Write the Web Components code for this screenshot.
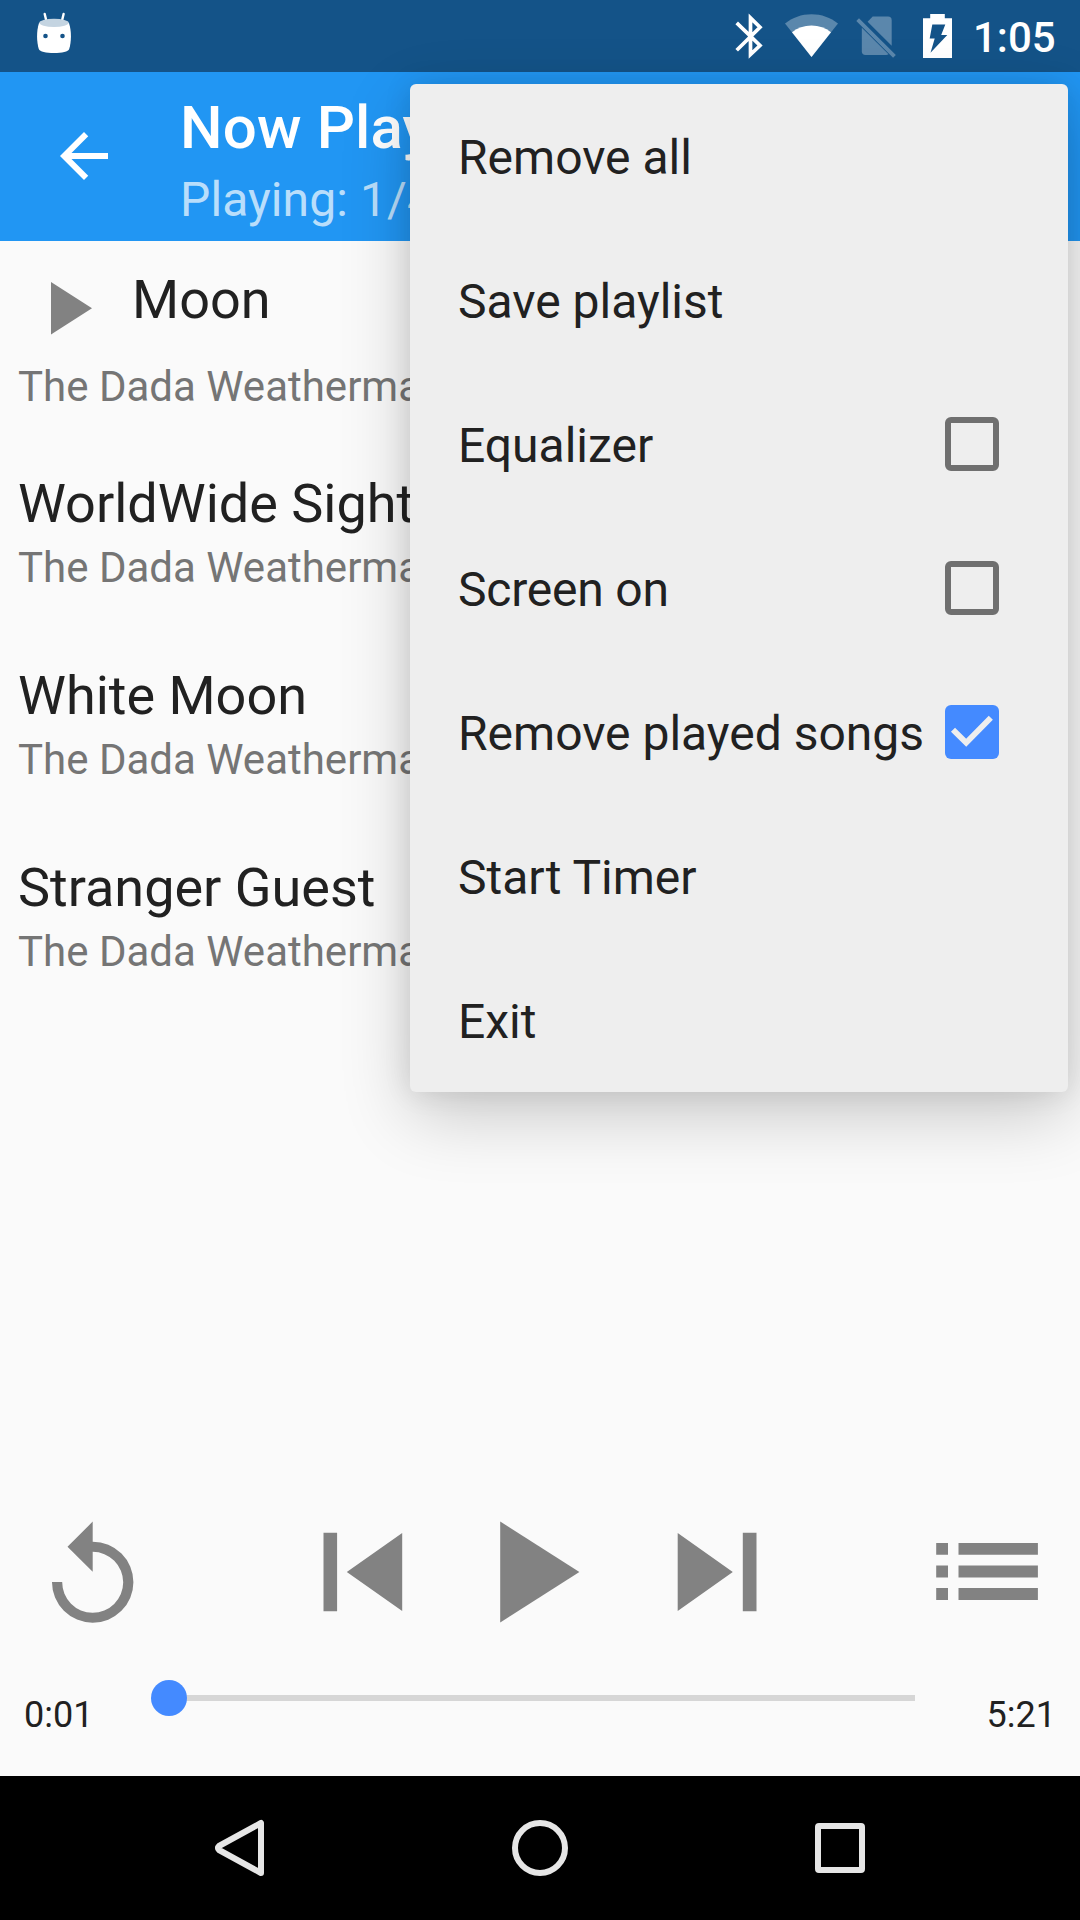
<!DOCTYPE html>
<html lang="en">
<head>
<meta charset="utf-8">
<title>Now Playing</title>
<style>
  html, body { margin: 0; padding: 0; }
  body { width: 1080px; height: 1920px; overflow: hidden; background: #fafafa; font-family: Roboto, "Liberation Sans", sans-serif; color: #212121; }
</style>
</head>
<body>
<phone-screen>
  <status-bar slot="status">1:05</status-bar>
  <app-header slot="header">Now Playing<span slot="subtitle">Playing: 1/4</span></app-header>
  <song-row playing>Moon<span slot="artist">The Dada Weatherman</span></song-row>
  <song-row>WorldWide Sight<span slot="artist">The Dada Weatherman</span></song-row>
  <song-row>White Moon<span slot="artist">The Dada Weatherman</span></song-row>
  <song-row>Stranger Guest<span slot="artist">The Dada Weatherman</span></song-row>
  <player-controls slot="controls"></player-controls>
  <seek-bar slot="seek"><span slot="elapsed">0:01</span><span slot="total">5:21</span></seek-bar>
  <nav-bar slot="nav"></nav-bar>
  <popup-menu slot="menu">
    <menu-item>Remove all</menu-item>
    <menu-item>Save playlist</menu-item>
    <menu-item>Equalizer<check-box slot="control"></check-box></menu-item>
    <menu-item style="letter-spacing:-.2px">Screen on<check-box slot="control"></check-box></menu-item>
    <menu-item>Remove played songs<check-box slot="control" checked></check-box></menu-item>
    <menu-item>Start Timer</menu-item>
    <menu-item>Exit</menu-item>
  </popup-menu>
</phone-screen>

<script>
  function define(name, html) {
    customElements.define(name, class extends HTMLElement {
      constructor() {
        super();
        this.attachShadow({ mode: 'open' }).innerHTML = html;
      }
    });
  }

  define('phone-screen', `
    <style>
      :host { display: flex; flex-direction: column; position: relative; width: 1080px; height: 1920px; background: #fafafa; overflow: hidden; white-space: nowrap; }
      .list { flex: 1; display: flex; flex-direction: column; min-height: 0; }
    </style>
    <slot name="status"></slot>
    <slot name="header"></slot>
    <div class="list"><slot></slot></div>
    <slot name="controls"></slot>
    <slot name="seek"></slot>
    <slot name="nav"></slot>
    <slot name="menu"></slot>`);

  define('status-bar', `
    <style>
      :host { display: flex; flex: none; box-sizing: border-box; height: 72px; padding: 0 23px 0 36px; background: #145388; color: #fff; }
      svg { display: block; flex: none; }
      .gap { flex: 1; }
      .wifi { margin-left: 16px; } .sim { margin-left: 12px; } .bat { margin-left: 20px; }
      .time { width: 84px; margin-left: 17px; padding-top: 13px; font-size: 42px; font-weight: 500; line-height: 49px; }
    </style>
    <svg width="36" height="72" viewBox="36 0 36 72">
      <path d="M44.7 14 46.5 21.5M63.6 14 61.8 21.5" stroke="#fff" stroke-width="2.4" stroke-linecap="round"/>
      <path d="M39 23C36.300 31 36.600 42 38.800 49 39.700 51.600 46 53 54 53S68.300 51.600 69.200 49C71.400 42 71.700 31 69 23Z" fill="#fff"/>
      <ellipse cx="54" cy="22.800" rx="14.800" ry="4.100" fill="#c4d4e1"/>
      <circle cx="45.500" cy="36" r="2.300" fill="#145388"/><circle cx="62.500" cy="36" r="2.300" fill="#145388"/>
    </svg>
    <div class="gap"></div>
    <svg width="36" height="72" viewBox="732 0 36 72"><path d="M736.700 22.800 760 45.500 750.500 54.500V18L760 27.300 736.700 50.200" fill="none" stroke="#fff" stroke-width="3.700"/></svg>
    <svg class="wifi" width="56" height="72" viewBox="784 0 56 72">
      <path d="M811.500 57 785 23.500C792.500 17.500 801.500 14.200 811.500 14.200S830.500 17.500 838 23.500Z" fill="#fff" opacity=".3"/>
      <path d="M811.500 57 792 32.300C797.500 27.800 804 25.600 811.500 25.600S825.500 27.800 831 32.300Z" fill="#fff"/>
    </svg>
    <svg class="sim" width="48" height="72" viewBox="852 0 48 72">
      <g fill="#fff" opacity=".3"><path d="M861.800 27.700 888.500 54.200Q887.500 55 886 55H865.500Q861.800 55 861.800 51.300Z"/><path d="M867.600 21.800 872.700 16.500H888Q891.700 16.500 891.700 20.200V45.800Z"/><path d="M856.300 20.900 859 18.200 895.800 55.100 893.100 57.800Z"/></g>
    </svg>
    <svg class="bat" width="36" height="72" viewBox="920 0 36 72">
      <path d="M930.200 14H944.800V18.300H952V58H923V18.300H930.200Z" fill="#fff"/>
      <path d="M932.300 24.500H945.300L941.200 34.900H947.300L930.500 52.800 934.700 38.600H929.700Z" fill="#145388"/>
    </svg>
    <div class="time"><slot></slot></div>`);

  define('app-header', `
    <style>
      :host { display: flex; flex: none; box-sizing: border-box; height: 169px; background: #2196f3; color: #fff; }
      svg { display: block; flex: none; margin: 48px 48px 0 48px; }
      .title { margin-top: 20px; font-size: 60px; font-weight: 500; line-height: 71px; letter-spacing: .15px; }
      .sub { margin-top: 8px; font-size: 48px; line-height: 57px; letter-spacing: .1px; color: rgba(255,255,255,.7); }
      .text { margin-left: 12px; }
    </style>
    <svg width="72" height="72" viewBox="0 0 24 24" fill="#fff"><path d="M20 11H7.830l5.590-5.590L12 4l-8 8 8 8 1.410-1.410L7.830 13H20v-2z"/></svg>
    <div class="text"><div class="title"><slot></slot></div><div class="sub"><slot name="subtitle"></slot></div></div>`);

  define('song-row', `
    <style>
      :host { display: block; flex: none; box-sizing: border-box; height: 192px; padding: 15px 18px 0; }
      :host([playing]) { height: 216px; padding-top: 27px; }
      .head { display: flex; height: 63px; }
      svg { display: none; flex: none; margin: 14px 40px 0 33px; }
      :host([playing]) svg { display: block; }
      .title { font-size: 54px; line-height: 63px; }
      .artist { margin-top: 8px; font-size: 42px; line-height: 49px; color: #757575; }
      :host([playing]) .artist { margin-top: 31px; }
    </style>
    <div class="head"><svg width="41" height="53" viewBox="0 0 41 53"><path d="M0 0 41 26.200 0 52.400Z" fill="#828282"/></svg><div class="title"><slot></slot></div></div>
    <div class="artist"><slot name="artist"></slot></div>`);

  define('player-controls', `
    <style>
      :host { display: flex; flex: none; box-sizing: border-box; height: 120px; padding: 0 32px; justify-content: space-between; }
      div { display: flex; gap: 57px; }
      svg { display: block; flex: none; fill: #828282; }
    </style>
    <svg width="120" height="120"><path d="M60.700 29.700V9.600L35.500 34.700 60.700 59.700V39.800A30.500 30.500 0 1 1 30.200 70.100H20A40.700 40.500 0 1 0 60.700 29.700Z"/></svg>
    <div>
      <svg width="120" height="120"><path d="M20.500 20.700H34.100V99.300H20.500ZM43.800 60 99.200 21V99Z"/></svg>
      <svg width="120" height="120"><path d="M20.200 9.500 99.400 60 20.200 110.500Z"/></svg>
      <svg width="120" height="120"><path d="M20.700 21 75.800 60 20.700 99ZM85.800 20.700H99.500V99.300H85.800Z"/></svg>
    </div>
    <svg width="120" height="120"><path d="M8.200 31H20V42.800H8.200ZM30.500 31H109.900V42.800H30.500ZM8.200 53.600H20V65.500H8.200ZM30.500 53.600H109.900V65.500H30.500ZM8.200 76.100H20V88H8.200ZM30.500 76.100H109.900V88H30.500Z"/></svg>`);

  define('seek-bar', `
    <style>
      :host { display: flex; flex: none; box-sizing: border-box; height: 144px; padding: 0 24px; justify-content: space-between; font-size: 36px; line-height: 42px; }
      .time { width: 144px; padding-top: 62px; }
      .end { width: 141px; text-align: right; }
      .track { position: relative; flex: 1; height: 6px; margin-top: 63px; background: #d6d6d6; }
      .thumb { position: absolute; left: -17px; top: -15px; width: 36px; height: 36px; border-radius: 50%; background: #448aff; }
    </style>
    <div class="time"><slot name="elapsed"></slot></div>
    <div class="track"><div class="thumb"></div></div>
    <div class="time end"><slot name="total"></slot></div>`);

  define('nav-bar', `
    <style>
      :host { display: flex; flex: none; height: 144px; justify-content: center; align-items: center; gap: 228px; background: #000; }
      svg { display: block; fill: none; stroke: #e6e6e6; stroke-width: 6; stroke-linejoin: round; }
    </style>
    <svg width="72" height="72"><path d="M57 11V61L15 38Q12.800 36 15 34Z"/></svg>
    <svg width="72" height="72"><circle cx="36" cy="36" r="25"/></svg>
    <svg width="72" height="72"><rect x="14" y="14" width="44" height="44" rx="1"/></svg>`);

  define('popup-menu', `
    <style>
      :host { display: flex; flex-direction: column; position: absolute; left: 410px; top: 84px; width: 658px; height: 1008px; border-radius: 6px; background: #eee; box-shadow: 0 23px 70px rgba(0,0,0,.2), 0 0 28px rgba(0,0,0,.1); }
    </style>
    <slot></slot>`);

  define('menu-item', `
    <style>
      :host { display: flex; flex: none; align-items: center; justify-content: space-between; box-sizing: border-box; height: 144px; padding: 0 69px 0 48px; font-size: 48px; line-height: 57px; }
      .label { padding-top: 3px; }
    </style>
    <div class="label"><slot></slot></div><slot name="control"></slot>`);

  define('check-box', `
    <style>
      :host { display: block; box-sizing: border-box; width: 54px; height: 54px; border: 6px solid #6f6f6f; border-radius: 6px; }
      :host([checked]) { border: 0; background: #448aff; }
      svg { display: none; }
      :host([checked]) svg { display: block; }
    </style>
    <svg width="54" height="54"><path d="M8 24.700 21.200 37.700 45.800 12.800" fill="none" stroke="#eee" stroke-width="5.800"/></svg>`);
</script>
</body>
</html>
